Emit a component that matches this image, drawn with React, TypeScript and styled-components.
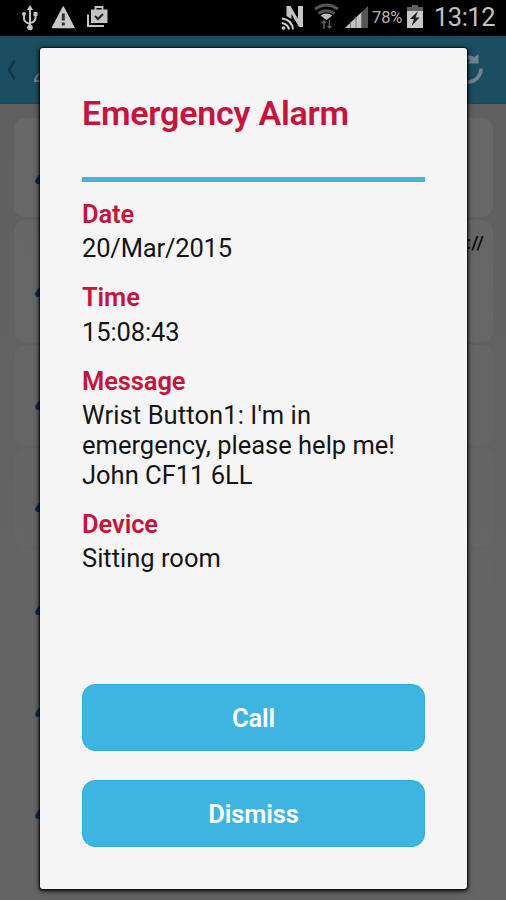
import React from 'react';
import styled, { createGlobalStyle } from 'styled-components';

const GlobalStyle = createGlobalStyle`
  * { box-sizing: border-box; }
  body { margin: 0; background: #626262; font-family: Roboto, "Liberation Sans", sans-serif; }
`;

const Screen = styled.div`
  position: relative;
  width: 506px;
  height: 900px;
  overflow: hidden;
  background: linear-gradient(#5e5e5e, #656565 75%);
`;

const StatusBar = styled.header`
  height: 36px;
  display: flex;
  align-items: flex-start;
  justify-content: space-between;
  background: #000;
  color: #c2c2c2;
`;

const StatusGroup = styled.div<{ $end?: number }>`
  display: flex;
  height: 36px;
  padding-right: ${(p) => p.$end ?? 0}px;
`;

const StatusDrawing = styled.svg`
  display: block;
  height: 36px;
`;

const Percent = styled.span`
  width: 36px;
  padding-left: 2px;
  margin-left: 2px;
  font-size: 16.5px;
  line-height: 36px;
  letter-spacing: -0.1px;
  color: #b4b4b4;
`;

const Clock = styled.span`
  width: 62px;
  margin-left: 10px;
  font-size: 25.5px;
  line-height: 34px;
  letter-spacing: -0.5px;
  white-space: nowrap;
`;

const ActionBar = styled.div`
  height: 68px;
  display: flex;
  justify-content: space-between;
  background: #1a4e60;
  border-bottom: 1px solid #29434c;
`;

const ActionDrawing = styled.svg`
  display: block;
  height: 68px;
`;

const List = styled.div`
  display: flex;
  flex-direction: column;
  gap: 3px;
  padding: 14px 13px 0 14px;
`;

const Card = styled.div<{ $height: number; $faint: number }>`
  flex: none;
  height: ${(p) => p.$height}px;
  padding: 12px 9px 0 21px;
  display: flex;
  justify-content: space-between;
  border-radius: 11px;
  background: rgba(105, 105, 105, ${(p) => p.$faint});
`;

const Marker = styled.svg<{ $top: number }>`
  margin-top: ${(p) => p.$top}px;
`;

const CardText = styled.span`
  font-size: 19px;
  font-weight: 500;
  line-height: 22px;
  color: #080808;
`;

const Dialog = styled.section`
  position: absolute;
  left: 40px;
  top: 48px;
  width: 427px;
  height: 841px;
  padding: 0 42px;
  display: flex;
  flex-direction: column;
  border-radius: 3px;
  background: #f5f5f5;
  box-shadow: 0 0 1px 1px rgba(0, 0, 0, 0.45), 0 1px 3px 1px rgba(0, 0, 0, 0.75), 0 2px 7px 1px rgba(0, 0, 0, 0.35);
`;

const Title = styled.h1`
  height: 134px;
  margin: 0;
  padding-top: 45px;
  font-size: 34px;
  font-weight: 600;
  line-height: 40px;
  letter-spacing: -0.22px;
  white-space: nowrap;
  color: #c6143c;
  border-bottom: 5px solid #43b5dd;
`;

const Details = styled.dl`
  flex: 1;
  margin: 0;
  padding-top: 17px;
  display: flex;
  flex-direction: column;
  gap: 19px;
`;

const Field = styled.div`
  display: flex;
  flex-direction: column;
  gap: 4.3px;
  font-size: 25.5px;
  line-height: 30px;
`;

const Label = styled.dt`
  height: 30px;
  font-weight: 600;
  letter-spacing: -0.1px;
  color: #c6143c;
`;

const Value = styled.dd`
  margin: 0;
  color: #151515;
`;

const Line = styled.div<{ $spacing: number }>`
  white-space: nowrap;
  letter-spacing: ${(p) => p.$spacing}px;
`;

const Actions = styled.div`
  display: flex;
  flex-direction: column;
  gap: 29px;
  padding-bottom: 42px;
`;

const ActionButton = styled.button`
  height: 67px;
  border: 1px solid #2cafdb;
  border-radius: 13px;
  background: #3eb5e1;
  color: #fff;
  font: 600 25.5px/30px Roboto, "Liberation Sans", sans-serif;
  letter-spacing: -0.1px;
`;

const fields = [
  { label: 'Date', lines: [{ text: '20/Mar/2015', spacing: -0.17 }] },
  { label: 'Time', lines: [{ text: '15:08:43', spacing: -0.1 }] },
  {
    label: 'Message',
    lines: [
      { text: "Wrist Button1: I'm in", spacing: 0.1 },
      { text: 'emergency, please help me!', spacing: 0 },
      { text: 'John CF11 6LL', spacing: 0 },
    ],
  },
  { label: 'Device', lines: [{ text: 'Sitting room', spacing: 0 }] },
];

const cards = [
  { height: 99, faint: 0.75, marker: 44 },
  { height: 122, faint: 0.7, marker: 55, text: '://' },
  { height: 100, faint: 0.6, marker: 43 },
  { height: 99, faint: 0.35, marker: 42 },
  { height: 100, faint: 0.2, marker: 43 },
  { height: 99, faint: 0.1, marker: 42 },
  { height: 100, faint: 0.1, marker: 42 },
];

const NoticeIcons = () => (
  <StatusDrawing width="110" viewBox="0 0 110 36" fill="none" stroke="#c4c4c4">
    <path d="M30 10v17M24 14v5q0 3 6 5M35.500 15v3q0 4-5.500 5" strokeWidth="2" />
    <path d="m30 5-3.200 5h6.400zM33.500 12h4v4h-4z" fill="#c4c4c4" stroke="none" />
    <circle cx="24" cy="14" r="2" fill="#c4c4c4" stroke="none" />
    <circle cx="30" cy="27.500" r="2.800" fill="#c4c4c4" stroke="none" />
    <path d="M63.300 7 74 27.500H52.500z" fill="#c9c9c9" stroke="#c9c9c9" strokeWidth="1.500" strokeLinejoin="round" />
    <path d="M63.300 13.500v7M63.300 22.500v3" stroke="#333" strokeWidth="3" />
    <path d="M88 14.500V26h16" strokeWidth="2" />
    <path d="M91 9.500h16.500V23H91z" fill="#c4c4c4" stroke="none" />
    <path d="M95.500 10V7h7v3" strokeWidth="1.800" />
    <path d="m95 16 3 3 5-5" stroke="#222" strokeWidth="2" />
  </StatusDrawing>
);

const SignalIcons = () => (
  <StatusDrawing width="88" viewBox="280 0 88 36" fill="none">
    <path d="M286.500 16V6h4l7.500 13V6h5v21h-4l-7.500-13v5z" fill="#c4c4c4" />
    <g stroke="#d0d0d0" strokeWidth="2">
      <path d="M282 18.500q10 1 11 11M282 23q6 1 7 6.500" />
    </g>
    <circle cx="283.500" cy="28" r="1.800" fill="#d0d0d0" />
    <path d="M315 9q11.500-8 23 0M318.500 13.500q8-5.500 16 0" stroke="#555" strokeWidth="3" />
    <path d="M320.500 15.500q6-4 12 0L326.500 20z" fill="#bbb" />
    <path d="M324 29v-8M322 23l2-2 2 2M329.500 20v8M327.500 26l2 2 2-2" stroke="#606060" strokeWidth="1.500" />
    <path d="M345 28 368 6v22z" fill="#555" />
    <path d="M345 28 362 11.700V28z" fill="#c3c3c3" />
    <path d="M350.500 22v6M356 17v11M361.500 12v16" stroke="#777" strokeWidth="1" />
  </StatusDrawing>
);

const BatteryIcon = () => (
  <StatusDrawing width="18" viewBox="0 0 18 36">
    <path d="M6 5h6v2h5v6H1V7h5z" fill="#606060" />
    <path d="M1 11h16v17H1z" fill="#c8c8c8" />
    <path d="m12 11-8 8h4L5.500 26l8-8.500h-4z" fill="#1c1c1c" />
  </StatusDrawing>
);

export default function App() {
  return (
    <>
      <GlobalStyle />
      <Screen>
        <StatusBar>
          <StatusGroup>
            <NoticeIcons />
          </StatusGroup>
          <StatusGroup $end={10}>
            <SignalIcons />
            <Percent>78%</Percent>
            <BatteryIcon />
            <Clock>13:12</Clock>
          </StatusGroup>
        </StatusBar>
        <ActionBar>
          <ActionDrawing width="60" viewBox="0 0 60 68" fill="none">
            <path d="m14.500 24.500-5.500 9.500 5.500 9.500" stroke="#123743" strokeWidth="2.500" />
            <path d="M42 36q-7 4-7 9h7" stroke="#77858a" strokeWidth="2" />
          </ActionDrawing>
          <ActionDrawing width="46" viewBox="460 0 46 68" fill="none">
            <path d="M481.300 32.500q-1.500 12-12.300 13.500-4 0-7-3" stroke="#6e858d" strokeWidth="3.500" />
            <path d="M466 19.500q5-1 8.500 1.500l4-3v9.500H467l3-3q-2-2-4-1.500z" fill="#6e858d" />
          </ActionDrawing>
        </ActionBar>
        <List>
          {cards.map((card, i) => (
            <Card key={i} $height={card.height} $faint={card.faint}>
              <Marker $top={card.marker} width="8" height="11" viewBox="0 0 8 11">
                <path d="M8 0 3.500 1 0 6.500q0 3.500 3 3.500h5z" fill="#0d2c57" />
              </Marker>
              {card.text && <CardText>{card.text}</CardText>}
            </Card>
          ))}
        </List>
        <Dialog role="dialog" aria-label="Emergency Alarm">
          <Title>Emergency Alarm</Title>
          <Details>
            {fields.map((field) => (
              <Field key={field.label}>
                <Label>{field.label}</Label>
                <Value>
                  {field.lines.map((line) => (
                    <Line key={line.text} $spacing={line.spacing}>{line.text}</Line>
                  ))}
                </Value>
              </Field>
            ))}
          </Details>
          <Actions>
            <ActionButton>Call</ActionButton>
            <ActionButton>Dismiss</ActionButton>
          </Actions>
        </Dialog>
      </Screen>
    </>
  );
}
